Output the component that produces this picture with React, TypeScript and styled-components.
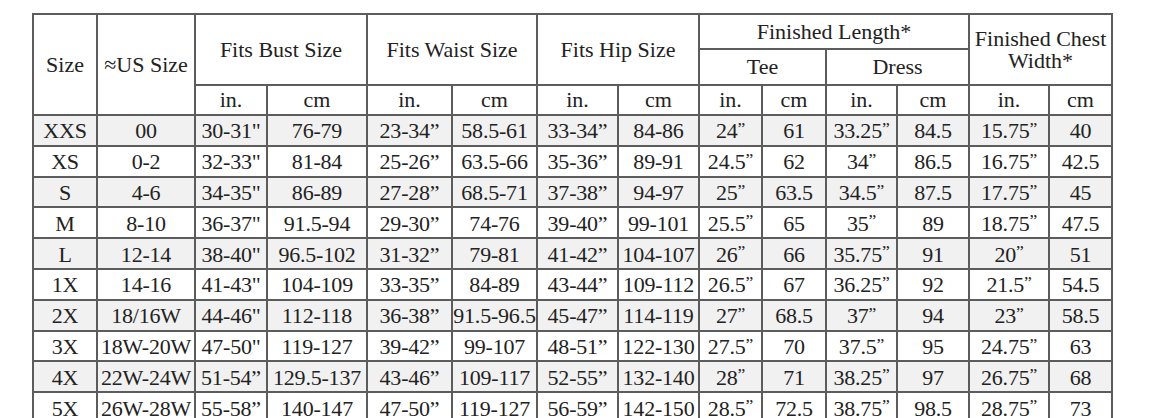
import React from "react";
import styled, { createGlobalStyle } from "styled-components";

const Global = createGlobalStyle`
  html, body { margin: 0; padding: 0; background: #ffffff; }
  body { font-family: "Liberation Serif", "DejaVu Serif", serif; color: #222222; }
`;

const Page = styled.div`
  width: 1170px;
  height: 418px;
  overflow: hidden;
  padding: 13px 0 0 32px;
  box-sizing: border-box;
`;

const Table = styled.table`
  border-collapse: collapse;
  table-layout: fixed;
  width: 1081px;
  border: 2px solid #5c5c5c;
  font-size: 22px;
  color: #222222;
`;

const HeadCell = styled.th<{ $lh?: number }>`
  border: 2px solid #5c5c5c;
  font-weight: normal;
  text-align: center;
  vertical-align: middle;
  padding: 0;
  white-space: nowrap;
  line-height: ${(p) => (p.$lh ? `${p.$lh}px` : "1")};
  background: #ffffff;
`;

const HeadRow = styled.tr<{ $h: number }>`
  height: ${(p) => p.$h}px;
`;

const BodyRow = styled.tr<{ $shade: boolean }>`
  height: 30.8px;
  background: ${(p) => (p.$shade ? "#f1f1f1" : "#ffffff")};
`;

const Cell = styled.td`
  border: 2px solid #5c5c5c;
  text-align: center;
  vertical-align: middle;
  padding: 2px 0 0 0;
  white-space: nowrap;
  line-height: 1;
  letter-spacing: -0.2px;
  overflow: visible;
`;

const Raised = styled.span`
  font-size: 0.8em;
  position: relative;
  top: -0.25em;
`;

const widths = [64, 98, 72, 100, 85, 85, 81, 81, 63, 64, 71, 72, 80, 63];

const rows: string[][] = [
  ["XXS", "00", "30-31\"", "76-79", "23-34”", "58.5-61", "33-34”", "84-86", "24”", "61", "33.25”", "84.5", "15.75”", "40"],
  ["XS", "0-2", "32-33\"", "81-84", "25-26”", "63.5-66", "35-36”", "89-91", "24.5”", "62", "34”", "86.5", "16.75”", "42.5"],
  ["S", "4-6", "34-35\"", "86-89", "27-28”", "68.5-71", "37-38”", "94-97", "25”", "63.5", "34.5”", "87.5", "17.75”", "45"],
  ["M", "8-10", "36-37\"", "91.5-94", "29-30”", "74-76", "39-40”", "99-101", "25.5”", "65", "35”", "89", "18.75”", "47.5"],
  ["L", "12-14", "38-40\"", "96.5-102", "31-32”", "79-81", "41-42”", "104-107", "26”", "66", "35.75”", "91", "20”", "51"],
  ["1X", "14-16", "41-43\"", "104-109", "33-35”", "84-89", "43-44”", "109-112", "26.5”", "67", "36.25”", "92", "21.5”", "54.5"],
  ["2X", "18/16W", "44-46\"", "112-118", "36-38”", "91.5-96.5", "45-47”", "114-119", "27”", "68.5", "37”", "94", "23”", "58.5"],
  ["3X", "18W-20W", "47-50\"", "119-127", "39-42”", "99-107", "48-51”", "122-130", "27.5”", "70", "37.5”", "95", "24.75”", "63"],
  ["4X", "22W-24W", "51-54”", "129.5-137", "43-46”", "109-117", "52-55”", "132-140", "28”", "71", "38.25”", "97", "26.75”", "68"],
  ["5X", "26W-28W", "55-58”", "140-147", "47-50”", "119-127", "56-59”", "142-150", "28.5”", "72.5", "38.75”", "98.5", "28.75”", "73"],
];

const raisedCols = new Set([8, 10, 12]);

function renderValue(v: string, col: number) {
  if (raisedCols.has(col) && v.endsWith("”")) {
    return (
      <>
        {v.slice(0, -1)}
        <Raised>”</Raised>
      </>
    );
  }
  return v;
}

export default function App() {
  return (
    <>
      <Global />
      <Page>
        <Table>
          <colgroup>
            {widths.map((w, i) => (
              <col key={i} style={{ width: w }} />
            ))}
          </colgroup>
          <thead>
            <HeadRow $h={35}>
              <HeadCell rowSpan={3}>Size</HeadCell>
              <HeadCell rowSpan={3}>≈US Size</HeadCell>
              <HeadCell colSpan={2} rowSpan={2}>Fits Bust Size</HeadCell>
              <HeadCell colSpan={2} rowSpan={2}>Fits Waist Size</HeadCell>
              <HeadCell colSpan={2} rowSpan={2}>Fits Hip Size</HeadCell>
              <HeadCell colSpan={4}>Finished Length*</HeadCell>
              <HeadCell colSpan={2} rowSpan={2} $lh={22}>
                Finished Chest
                <br />
                Width*
              </HeadCell>
            </HeadRow>
            <HeadRow $h={36}>
              <HeadCell colSpan={2}>Tee</HeadCell>
              <HeadCell colSpan={2}>Dress</HeadCell>
            </HeadRow>
            <HeadRow $h={30}>
              {Array.from({ length: 6 }).map((_, i) => (
                <React.Fragment key={i}>
                  <HeadCell>in.</HeadCell>
                  <HeadCell>cm</HeadCell>
                </React.Fragment>
              ))}
            </HeadRow>
          </thead>
          <tbody>
            {rows.map((r, ri) => (
              <BodyRow key={ri} $shade={ri % 2 === 0}>
                {r.map((v, ci) => (
                  <Cell key={ci}>{renderValue(v, ci)}</Cell>
                ))}
              </BodyRow>
            ))}
          </tbody>
        </Table>
      </Page>
    </>
  );
}
